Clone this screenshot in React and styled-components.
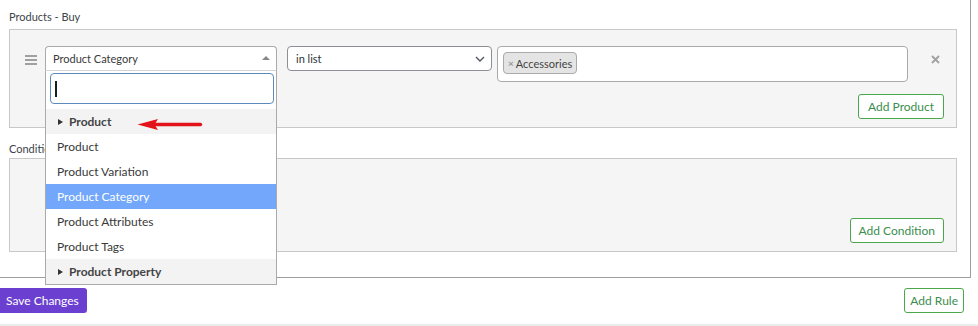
import React from "react";
import styled, { createGlobalStyle } from "styled-components";

const Global = createGlobalStyle`
  html, body { margin: 0; padding: 0; background: #fff; }
  body {
    font-family: Lato, "Open Sans", sans-serif;
    color: #444;
    width: 978px;
    height: 326px;
    overflow: hidden;
  }
`;

const Panel = styled.div`
  box-sizing: border-box;
  width: 971px;
  border-right: 1px solid #9d9d9d;
  border-bottom: 1px solid #9d9d9d;
  padding: 9px 13px 25px 9px;
`;

const SectionLabel = styled.div`
  font-size: 11px;
  line-height: 16px;
  color: #3c434a;
  margin: ${(p) => (p.$spaced ? "13px 0 1px" : "0 0 4px")};
`;

const RuleBox = styled.div`
  box-sizing: border-box;
  height: ${(p) => p.$h}px;
  background: #f5f5f5;
  border: 1px solid #c8c8c8;
  padding: 16px 12px 8px 15px;
  display: flex;
  flex-direction: column;
  justify-content: ${(p) => (p.$end ? "flex-end" : "space-between")};
`;

const Row = styled.div`
  display: flex;
  align-items: flex-start;
`;

const Handle = styled.svg`
  flex: none;
  margin: 9px 8px 0 0;
`;

const SelectWrap = styled.div`
  position: relative;
  flex: none;
  width: 232px;
  margin-right: 10px;
`;

const SelectBox = styled.div`
  box-sizing: border-box;
  height: 24px;
  border: 1px solid #aaa;
  border-bottom: none;
  border-radius: 4px 4px 0 0;
  background: #fff;
  display: flex;
  align-items: center;
  justify-content: space-between;
  padding: 0 6px 0 7px;
  font-size: 11px;
  line-height: 22px;
  color: #3a3a3a;
`;

const UpArrow = styled.span`
  width: 0;
  height: 0;
  border-left: 4px solid transparent;
  border-right: 4px solid transparent;
  border-bottom: 4px solid #888;
  margin-top: -1px;
`;

const Dropdown = styled.div`
  position: absolute;
  top: 100%;
  left: 0;
  width: 100%;
  box-sizing: border-box;
  border: 1px solid #aaa;
  border-top: 1px solid #d4d4d4;
  background: #fff;
  z-index: 5;
`;

const SearchArea = styled.div`
  padding: 2px 2px 5px 4px;
`;

const SearchField = styled.div`
  box-sizing: border-box;
  height: 31px;
  border: 1px solid #5b8bbd;
  border-radius: 4px;
  display: flex;
  align-items: center;
  padding-left: 4px;
`;

const Caret = styled.span`
  width: 2px;
  height: 16px;
  background: #1e1e1e;
`;

const Option = styled.div`
  height: 25px;
  line-height: 25px;
  padding-left: 11px;
  font-size: 12px;
  color: ${(p) => (p.$active ? "#fff" : "#3a3a3a")};
  background: ${(p) => (p.$active ? "#72a7fb" : "#fff")};
`;

const Group = styled.div`
  height: 25px;
  display: flex;
  align-items: center;
  gap: 6px;
  padding-left: 12px;
  background: #f3f3f3;
  font-size: 12px;
  font-weight: 700;
  color: #444;
`;

const GroupTri = styled.span`
  width: 0;
  height: 0;
  border-top: 3.5px solid transparent;
  border-bottom: 3.5px solid transparent;
  border-left: 5px solid #333;
`;

const Pointer = styled.svg`
  position: absolute;
  left: 91px;
  top: 47px;
`;

const PlainSelect = styled.div`
  box-sizing: border-box;
  flex: none;
  width: 205px;
  height: 25px;
  border: 1px solid #8c8f94;
  border-radius: 4px;
  background: #fff;
  display: flex;
  align-items: center;
  justify-content: space-between;
  padding: 0 6px 0 8px;
  font-size: 11px;
  color: #2c3338;
  margin-right: 5px;
`;

const MultiBox = styled.div`
  box-sizing: border-box;
  flex: none;
  width: 411px;
  height: 36px;
  border: 1px solid #aaa;
  border-radius: 4px;
  background: #fff;
  padding: 5px 0 0 5px;
  display: flex;
  align-items: flex-start;
`;

const Tag = styled.span`
  box-sizing: border-box;
  height: 22px;
  background: #e4e4e4;
  border: 1px solid #aaa;
  border-radius: 4px;
  padding: 0 4px;
  display: flex;
  align-items: center;
  gap: 2px;
  font-size: 11px;
  color: #444;
`;

const TagX = styled.span`
  font-size: 10px;
  font-weight: 700;
  color: #999;
`;

const RemoveIcon = styled.svg`
  flex: none;
  margin: 9px 0 0 23px;
`;

const ActionButton = styled.button`
  box-sizing: border-box;
  height: 25px;
  padding: 0 ${(p) => p.$px}px;
  border: 1px solid #4aa74a;
  border-radius: 3px;
  background: #fff;
  color: #3b8d4d;
  font-family: inherit;
  font-size: 12px;
  line-height: 23px;
  align-self: flex-end;
  cursor: pointer;
`;

const Footer = styled.div`
  display: flex;
  justify-content: space-between;
  align-items: flex-start;
  width: 964px;
  margin-top: 10px;
`;

const SaveButton = styled.button`
  box-sizing: border-box;
  height: 25px;
  padding: 0 8px 0 6px;
  border: none;
  border-radius: 0 3px 3px 0;
  background: #6b3fcf;
  color: #fff;
  font-family: inherit;
  font-size: 12px;
  cursor: pointer;
`;

const BottomRule = styled.div`
  margin-top: 11px;
  height: 2px;
  width: 978px;
  background: #ececec;
`;

const options = [
  { type: "group", label: "Product" },
  { label: "Product" },
  { label: "Product Variation" },
  { label: "Product Category", active: true },
  { label: "Product Attributes" },
  { label: "Product Tags" },
  { type: "group", label: "Product Property" },
];

export default function App() {
  return (
    <>
      <Global />
      <Panel>
        <SectionLabel>Products - Buy</SectionLabel>
        <RuleBox $h={99}>
          <Row>
            <Handle width="12" height="10" viewBox="0 0 12 10">
              <rect x="0" y="0" width="12" height="2" fill="#a0a0a0" />
              <rect x="0" y="4" width="12" height="2" fill="#a0a0a0" />
              <rect x="0" y="8" width="12" height="2" fill="#a0a0a0" />
            </Handle>
            <SelectWrap>
              <SelectBox>
                <span>Product Category</span>
                <UpArrow />
              </SelectBox>
              <Dropdown>
                <SearchArea>
                  <SearchField>
                    <Caret />
                  </SearchField>
                </SearchArea>
                {options.map((o, i) =>
                  o.type === "group" ? (
                    <Group key={i}>
                      <GroupTri />
                      {o.label}
                    </Group>
                  ) : (
                    <Option key={i} $active={o.active}>
                      {o.label}
                    </Option>
                  )
                )}
                <Pointer width="66" height="13" viewBox="0 0 66 13">
                  <line x1="16" y1="6.5" x2="63.5" y2="6.5" stroke="#e3131b" strokeWidth="3.4" strokeLinecap="round" />
                  <polygon points="0.5,6.5 21,1 17.5,6.5 21,12" fill="#e3131b" />
                </Pointer>
              </Dropdown>
            </SelectWrap>
            <PlainSelect>
              <span>in list</span>
              <svg width="10" height="6" viewBox="0 0 10 6">
                <path d="M1 1 L5 5 L9 1" fill="none" stroke="#50575e" strokeWidth="1.4" />
              </svg>
            </PlainSelect>
            <MultiBox>
              <Tag>
                <TagX>×</TagX>
                Accessories
              </Tag>
            </MultiBox>
            <RemoveIcon width="9" height="9" viewBox="0 0 9 9">
              <path d="M1 1 L8 8 M8 1 L1 8" stroke="#a0a0a0" strokeWidth="1.8" />
            </RemoveIcon>
          </Row>
          <ActionButton $px={9}>Add Product</ActionButton>
        </RuleBox>
        <SectionLabel $spaced>Conditions</SectionLabel>
        <RuleBox $h={94} $end>
          <ActionButton $px={8}>Add Condition</ActionButton>
        </RuleBox>
      </Panel>
      <Footer>
        <SaveButton>Save Changes</SaveButton>
        <ActionButton $px={5}>Add Rule</ActionButton>
      </Footer>
      <BottomRule />
    </>
  );
}
